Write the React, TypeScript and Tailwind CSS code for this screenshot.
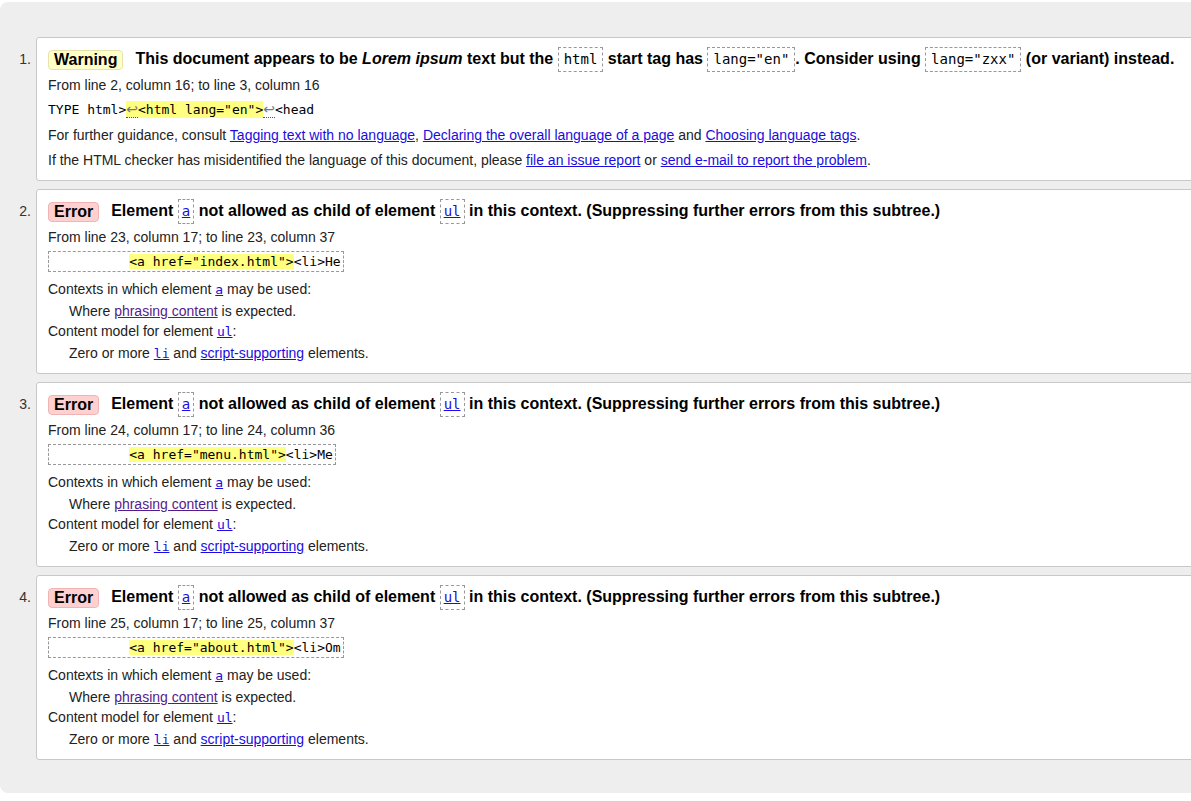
import type { ReactNode } from 'react';

const mono = "font-['DejaVu_Sans_Mono',monospace]";

function Lnk({ children, visited }: { children: ReactNode; visited?: boolean }) {
  return (
    <a href="#" className={visited ? 'text-[#551a8b] underline' : 'text-[#1a0dde] underline'}>
      {children}
    </a>
  );
}

function MonoLink({ children }: { children: ReactNode }) {
  return (
    <a href="#" className={`${mono} text-[13px] leading-none text-[#1a0dde] underline`}>
      {children}
    </a>
  );
}

// inline code box used in the message headings
function Tag({ children, wide }: { children: ReactNode; wide?: boolean }) {
  return (
    <code
      className={`${mono} -my-[3px] inline-block border border-dashed border-[#999] py-[2px] align-middle text-[14px] font-normal leading-[19px] ${
        wide ? 'px-[5px]' : 'px-[3px]'
      }`}
    >
      {children}
    </code>
  );
}

function Badge({ kind }: { kind: 'Warning' | 'Error' }) {
  const tone =
    kind === 'Warning'
      ? 'bg-[#ffffc8] border-[#e8e2a8]'
      : 'bg-[#ffd0d0] border-[#f0b4b4]';
  return (
    <span className={`mr-[12px] inline-block rounded-[4px] border px-[5px] align-middle leading-[18px] ${tone}`}>
      {kind}
    </span>
  );
}

function Item({ n, children }: { n: number; children: ReactNode }) {
  return (
    <li className="mb-2 flex last:mb-0">
      <div className="w-[36px] shrink-0 pr-[5px] pt-[10px] text-right leading-[24px] text-[#333]">{n}.</div>
      <div className="flex-1 rounded-[3px] border border-[#c8c8c8] bg-white pl-[11px] pt-[9px] pb-[10px]">
        {children}
      </div>
    </li>
  );
}

// return-arrow marker shown in the source extract
function Ret() {
  return (
    <span className="border-b border-dotted border-[#555] font-['DejaVu_Sans',sans-serif] text-[14px] leading-none text-[#777]">
      ↩
    </span>
  );
}

const errors = [
  { n: 2, from: 'From line 23, column 17; to line 23, column 37', href: 'index.html', tail: '<li>He' },
  { n: 3, from: 'From line 24, column 17; to line 24, column 36', href: 'menu.html', tail: '<li>Me' },
  { n: 4, from: 'From line 25, column 17; to line 25, column 37', href: 'about.html', tail: '<li>Om' },
];

export default function App() {
  return (
    <div className="h-[801px] w-[1191px] overflow-hidden bg-white pt-[2px] font-['Liberation_Sans',Arial,sans-serif] text-[14px] text-[#222]">
      <div className="w-[1240px] rounded-[8px] bg-[#eeeeee] pt-[35px] pb-[33px]">
        <ol>
          {/* warning */}
          <Item n={1}>
            <p className="whitespace-nowrap text-[16px] font-bold leading-[24px] text-black">
              <Badge kind="Warning" />
              This document appears to be <i>Lorem ipsum</i> text but the <Tag wide>html</Tag> start tag has{' '}
              <Tag wide>lang="en"</Tag>. Consider using <Tag wide>lang="zxx"</Tag> (or variant) instead.
            </p>
            <p className="mt-[4px] leading-[20px]">From line 2, column 16; to line 3, column 16</p>
            <p className={`${mono} mt-[5px] h-[20px] whitespace-pre text-[13px] leading-[20px] text-black`}>
              TYPE html&gt;
              <span className="bg-[#ffff80] py-[1px]">
                <Ret />
                {'<html lang="en">'}
              </span>
              <Ret />
              {'<head'}
            </p>
            <p className="mt-[5px] leading-[20px]">
              For further guidance, consult <Lnk>Tagging text with no language</Lnk>,{' '}
              <Lnk>Declaring the overall language of a page</Lnk> and <Lnk>Choosing language tags</Lnk>.
            </p>
            <p className="mt-[5px] leading-[20px]">
              If the HTML checker has misidentified the language of this document, please <Lnk>file an issue report</Lnk> or{' '}
              <Lnk>send e-mail to report the problem</Lnk>.
            </p>
          </Item>

          {errors.map((e) => (
            <Item key={e.n} n={e.n}>
              <p className="whitespace-nowrap text-[16px] font-bold leading-[24px] text-black">
                <Badge kind="Error" />
                Element{' '}
                <Tag>
                  <a href="#" className="text-[#1a0dde] underline">a</a>
                </Tag>{' '}
                not allowed as child of element{' '}
                <Tag>
                  <a href="#" className="text-[#1a0dde] underline">ul</a>
                </Tag>{' '}
                in this context. (Suppressing further errors from this subtree.)
              </p>
              <p className="mt-[4px] leading-[20px]">{e.from}</p>
              <div className="mt-[4px] flex">
                <code className={`${mono} inline-block whitespace-pre border border-dashed border-[#999] px-[2px] text-[13px] leading-[19px] text-black`}>
                  {'          '}
                  <span className="bg-[#ffff80]">{`<a href="${e.href}">`}</span>
                  {e.tail}
                </code>
              </div>
              <dl className="mt-[7px] leading-[20px]">
                <dt className="h-[20px]">
                  Contexts in which element <MonoLink>a</MonoLink> may be used:
                </dt>
                <dd className="mt-[2px] h-[20px] pl-[21px]">
                  Where <Lnk visited>phrasing content</Lnk> is expected.
                </dd>
                <dt className="h-[20px]">
                  Content model for element <MonoLink>ul</MonoLink>:
                </dt>
                <dd className="mt-[2px] h-[20px] pl-[21px]">
                  Zero or more <MonoLink>li</MonoLink> and <Lnk>script-supporting</Lnk> elements.
                </dd>
              </dl>
            </Item>
          ))}
        </ol>
      </div>
    </div>
  );
}
